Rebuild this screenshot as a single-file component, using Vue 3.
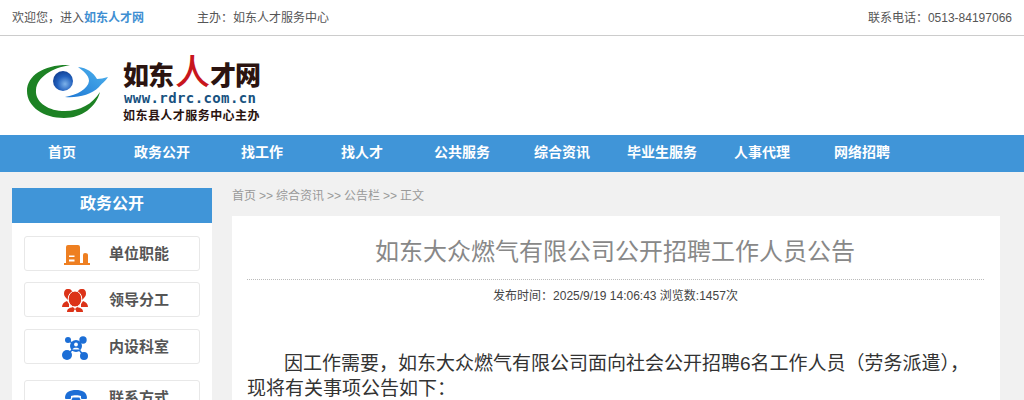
<script setup>
const navs = ["首页", "政务公开", "找工作", "找人才", "公共服务", "综合资讯", "毕业生服务", "人事代理", "网络招聘"];
</script>

<template>
  <div class="page">
    <div class="topbar">
      <span class="welcome">欢迎您，进入<b>如东人才网</b></span>
      <span class="host">主办：如东人才服务中心</span>
      <span class="phone">联系电话：0513-84197066</span>
    </div>

    <div class="header">
      <svg class="logo" viewBox="0 0 100 70" width="100" height="70">
        <defs>
          <radialGradient id="ball" cx="0.6" cy="0.65" r="0.7">
            <stop offset="0" stop-color="#7db2ea" />
            <stop offset="0.55" stop-color="#2160bd" />
            <stop offset="1" stop-color="#0f3d8f" />
          </radialGradient>
          <linearGradient id="bird" x1="0" y1="1" x2="1" y2="0">
            <stop offset="0" stop-color="#1d77d4" />
            <stop offset="1" stop-color="#4fb4ee" />
          </linearGradient>
        </defs>
        <path d="M50 10C25 9 7 20 7 36C7 52 24 63 44 63C62 63 76 52 80 37C72 50 58 57 42 56C26 55 15 46 16 35C17 22 32 13 50 10Z" fill="#1d8224" />
        <circle cx="43" cy="26" r="10" fill="url(#ball)" />
        <path d="M58 12C67 13 73 17 77 24C80 24 84 23 88 22C85 27 81 29 79 32C71 40 58 43 45 42C57 40 68 34 69 26C69 20 63 16 58 12Z" fill="url(#bird)" />
      </svg>
      <div class="brand">
        <div class="brand-name">如东<em>人</em>才网</div>
        <div class="brand-url">www.rdrc.com.cn</div>
        <div class="brand-sub">如东县人才服务中心主办</div>
      </div>
    </div>

    <div class="nav">
      <a v-for="n in navs" :key="n">{{ n }}</a>
    </div>

    <div class="content">
      <div class="side">
        <div class="side-title">政务公开</div>
        <div class="side-list">
          <div class="side-item">
            <svg viewBox="0 0 26 20" width="26" height="20">
              <path d="M2 18V2Q2 0 4 0H14Q16 0 16 2V18ZM19 10Q19 8 21 8Q24 8 24 10V18H19ZM0 18H26V20H0Z" fill="#ee7f21" />
              <path d="M5 10.5H10.5V12H5ZM5 14.5H10.5V16.5H5Z" fill="#fff" />
            </svg>
            <span>单位职能</span>
          </div>
          <div class="side-item">
            <svg class="tall" viewBox="0 0 26 23" width="26" height="23">
              <g fill="#dc3318">
                <path d="M6 0C9 0 11 2 10 5C9 8 7 10 6 11C4 9 2 7 2 5C2 2 3 0 6 0Z" />
                <path d="M20 0C23 0 24 2 24 5C24 7 22 9 20 11C19 10 17 8 16 5C15 2 17 0 20 0Z" />
                <path d="M0 18C0 15 2 13 5 12L7 15V18ZM26 18C26 15 24 13 21 12L19 15V18Z" />
                <path d="M5 23C5 20 7 19 11 18L13 20L15 18C19 19 21 20 21 23H14.5L13.5 20.5H12.5L11.5 23Z" />
              </g>
              <ellipse cx="13" cy="10" rx="6.8" ry="8" fill="#dc3318" stroke="#fff" stroke-width="1" />
            </svg>
            <span>领导分工</span>
          </div>
          <div class="side-item">
            <svg class="tall" viewBox="0 0 26 24" width="26" height="24">
              <path d="M6 4L14 10M21 4L14 10M5 19L14 10M22 20L14 10" stroke="#1c6ed6" stroke-width="1.5" />
              <g fill="#1c6ed6">
                <circle cx="6" cy="4" r="3" />
                <circle cx="21" cy="4" r="3.7" />
                <circle cx="5" cy="19" r="5" />
                <circle cx="22" cy="20" r="4" />
                <circle cx="14" cy="10" r="6" />
              </g>
              <circle cx="14" cy="8.5" r="1.9" fill="#fff" />
              <path d="M10.5 13.5C10.5 11 17.5 11 17.5 13.5Z" fill="#fff" />
            </svg>
            <span>内设科室</span>
          </div>
          <div class="side-item last">
            <svg class="tall" viewBox="0 0 22 20" width="22" height="20">
              <path d="M0 8C0 2 5 0 11 0C17 0 22 2 22 8Q22 9 21 9H17Q16 9 16 8V6C14 5 8 5 6 6V8Q6 9 5 9H1Q0 9 0 8Z" fill="#1c6ed6" />
              <path d="M7.5 7.5H14.5L19 18Q19 20 17 20H5Q3 20 3 18Z" fill="#1c6ed6" />
              <circle cx="11" cy="12.5" r="2.6" fill="#fff" />
            </svg>
            <span>联系方式</span>
          </div>
        </div>
      </div>

      <div class="main">
        <div class="crumb">首页 &gt;&gt; 综合资讯 &gt;&gt; 公告栏 &gt;&gt; 正文</div>
        <div class="article">
          <h1>如东大众燃气有限公司公开招聘工作人员公告</h1>
          <div class="meta">发布时间：2025/9/19 14:06:43 浏览数:1457次</div>
          <p>因工作需要，如东大众燃气有限公司面向社会公开招聘6名工作人员（劳务派遣），现将有关事项公告如下：</p>
        </div>
      </div>
    </div>
  </div>
</template>

<style>
html,
body {
  height: 400px;
  overflow: hidden;
  background: #f1f1f1;
}
</style>

<style scoped>
.page {
  font-family: "Liberation Sans", "Noto Sans CJK SC", sans-serif;
  font-size: 12px;
  color: #555;
}

/* 顶部条 */
.topbar {
  box-sizing: border-box;
  display: flex;
  align-items: center;
  height: 36px;
  padding: 0 12px 3px;
  background: #fff;
  border-bottom: 1px solid #ccc;
}
.welcome {
  width: 185px;
}
.welcome b {
  color: #3f8fd2;
}
.phone {
  margin-left: auto;
}

/* logo */
.header {
  display: flex;
  height: 99px;
  background: #fff;
}
.logo {
  margin: 19px 0 0 20px;
}
.brand {
  margin: 20px 0 0 3px;
  color: #2b1410;
}
.brand-name {
  height: 35px;
  font-size: 26px;
  font-weight: 900;
  line-height: 41px;
  letter-spacing: -1px;
  white-space: nowrap;
}
.brand-name em {
  font-style: normal;
  font-size: 35px;
  font-weight: 500;
  line-height: 30px;
  margin: 0 1px 0 2px;
  color: #c8161d;
}
.brand-url {
  font-family: "DejaVu Sans Mono", monospace;
  font-size: 14px;
  font-weight: 700;
  line-height: 15px;
  letter-spacing: 0.4px;
  margin-left: 1px;
  color: #17527f;
}
.brand-sub {
  font-size: 12px;
  font-weight: 700;
  line-height: 20px;
  letter-spacing: 0.45px;
  white-space: nowrap;
}

/* 导航 */
.nav {
  display: flex;
  height: 37px;
  padding-left: 12px;
  background: #4095d8;
}
.nav a {
  width: 100px;
  text-align: center;
  line-height: 35px;
  font-size: 14px;
  font-weight: 700;
  color: #fff;
}

.content {
  display: flex;
  gap: 20px;
  padding: 16px 24px 0 12px;
}

/* 左侧栏 */
.side {
  width: 200px;
  flex: none;
  background: #fff;
}
.side-title {
  height: 35px;
  line-height: 31px;
  text-align: center;
  font-size: 16px;
  font-weight: 700;
  color: #fff;
  background: #4095d8;
}
.side-list {
  padding: 13px 12px 0;
}
.side-item {
  box-sizing: border-box;
  display: flex;
  align-items: center;
  justify-content: flex-start;
  height: 35px;
  margin-bottom: 11px;
  padding-left: 39px;
  border: 1px solid #e8e8e8;
  border-radius: 3px;
  font-size: 15px;
  font-weight: 700;
  color: #555;
}
.side-item:nth-child(2) {
  margin-bottom: 12px;
}
.side-item:nth-child(3) {
  margin-bottom: 16px;
}
.side-item svg {
  flex: none;
  margin-top: 2px;
}
.side-item svg.tall {
  margin-left: -2px;
  margin-right: 2px;
}
.side-item span {
  margin-left: 19px;
  margin-bottom: 3px;
}
.side-item.last svg {
  margin-left: 1px;
  margin-right: 3px;
  margin-top: 4px;
}

/* 正文 */
.main {
  flex: 1;
}
.crumb {
  height: 28px;
  padding-top: 1px;
  box-sizing: border-box;
  line-height: 14px;
  word-spacing: -0.35px;
  color: #999;
}
.article {
  height: 400px;
  padding: 0 16px 0 15px;
  background: #fff;
}
.article h1 {
  margin: 0;
  padding: 19px 1px 10px 0;
  height: 64px;
  box-sizing: border-box;
  line-height: 34px;
  text-align: center;
  font-size: 24px;
  font-weight: 400;
  color: #888;
  border-bottom: 1px dotted #bbb;
}
.meta {
  height: 34px;
  line-height: 33px;
  text-align: center;
  color: #444;
}
.article p {
  margin: 0;
  padding-top: 37px;
  font-size: 19px;
  line-height: 25px;
  text-indent: 37px;
  color: #333;
}
</style>
